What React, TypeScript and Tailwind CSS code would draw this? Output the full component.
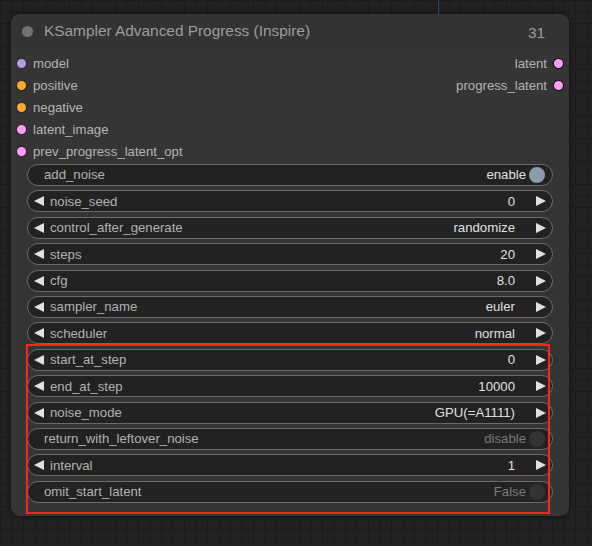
import React from 'react';

type Widget =
  | { kind: 'num' | 'combo'; label: string; value: string }
  | { kind: 'toggle'; label: string; value: string; on: boolean };

const inputs = [
  { name: 'model', color: 'bg-[#b39ddb]' },
  { name: 'positive', color: 'bg-[#ffa931]' },
  { name: 'negative', color: 'bg-[#ffa931]' },
  { name: 'latent_image', color: 'bg-[#ff9cf9]' },
  { name: 'prev_progress_latent_opt', color: 'bg-[#ff9cf9]' },
];

const outputs = ['latent', 'progress_latent'];

const widgets: Widget[] = [
  { kind: 'toggle', label: 'add_noise', value: 'enable', on: true },
  { kind: 'num', label: 'noise_seed', value: '0' },
  { kind: 'combo', label: 'control_after_generate', value: 'randomize' },
  { kind: 'num', label: 'steps', value: '20' },
  { kind: 'num', label: 'cfg', value: '8.0' },
  { kind: 'combo', label: 'sampler_name', value: 'euler' },
  { kind: 'combo', label: 'scheduler', value: 'normal' },
  { kind: 'num', label: 'start_at_step', value: '0' },
  { kind: 'num', label: 'end_at_step', value: '10000' },
  { kind: 'combo', label: 'noise_mode', value: 'GPU(=A1111)' },
  { kind: 'toggle', label: 'return_with_leftover_noise', value: 'disable', on: false },
  { kind: 'num', label: 'interval', value: '1' },
  { kind: 'toggle', label: 'omit_start_latent', value: 'False', on: false },
];

const Arrow = ({ dir }: { dir: 'left' | 'right' }) => (
  <svg width="10" height="10" viewBox="0 0 10 10" className="shrink-0">
    <polygon points={dir === 'left' ? '10,0 10,10 0,5' : '0,0 0,10 10,5'} fill="#e0e0e0" />
  </svg>
);

const WidgetRow = ({ w }: { w: Widget }) => {
  if (w.kind === 'toggle') {
    return (
      <div className="h-[22px] rounded-full border border-[#6a6a6a] bg-[#222222] flex items-center pl-[16px] pr-[7px]">
        <span className="text-[#b2b2b2] flex-1">{w.label}</span>
        <span className={w.on ? 'text-[#e0e0e0]' : 'text-[#7a7a7a]'}>{w.value}</span>
        <span className={`ml-[3px] w-[16px] h-[16px] rounded-full ${w.on ? 'bg-[#8b9bab]' : 'bg-[#333333]'}`} />
      </div>
    );
  }
  return (
    <div className="h-[22px] rounded-full border border-[#6a6a6a] bg-[#222222] flex items-center pl-[6px] pr-[6px]">
      <Arrow dir="left" />
      <span className="ml-[6px] text-[#b2b2b2] flex-1">{w.label}</span>
      <span className="text-[#e0e0e0] mr-[21px]">{w.value}</span>
      <Arrow dir="right" />
    </div>
  );
};

export default function App() {
  return (
    <div
      className="relative w-[592px] h-[546px] overflow-hidden bg-[#222222] bg-[linear-gradient(to_right,#1b1b1b_1px,transparent_1px),linear-gradient(to_bottom,#1b1b1b_1px,transparent_1px)] bg-[size:11.5px_11.5px] pt-[14px] pl-[11px] text-[13.2px] leading-none"
      style={{ fontFamily: '"Liberation Sans", Arial, sans-serif' }}
    >
      {/* link coming in from above */}
      <div className="absolute left-[438px] top-0 h-[14px] w-px bg-[#28487a]" />

      <div className="w-[558px] rounded-[9px] bg-[#353535] shadow-[0_0_6px_rgba(0,0,0,0.5)]">
        <div className="h-[33px] flex items-center border-b border-[#2f2f2f] bg-[#333333] rounded-t-[9px] pl-[11px] pr-[24px] pt-[2px]">
          <span className="w-[11px] h-[11px] rounded-full bg-[#737373]" />
          <span className="ml-[11px] text-[15.4px] text-[#9c9c9c] flex-1">KSampler Advanced Progress (Inspire)</span>
          <span className="text-[15.4px] text-[#9c9c9c] mt-[3px]">31</span>
        </div>

        <div className="pt-[5px] flex justify-between">
          <div className="flex flex-col">
            {inputs.map((s) => (
              <div key={s.name} className="h-[22px] flex items-center pl-[6px] pt-[1px]">
                <span className={`w-[9px] h-[9px] rounded-full ${s.color} ring-1 ring-[#2a2a2a]`} />
                <span className="ml-[7px] text-[#b4b4b4]">{s.name}</span>
              </div>
            ))}
          </div>
          <div className="flex flex-col items-end">
            {outputs.map((o) => (
              <div key={o} className="h-[22px] flex items-center pr-[6px] pt-[1px]">
                <span className="mr-[7px] text-[#b4b4b4]">{o}</span>
                <span className="w-[9px] h-[9px] rounded-full bg-[#ff9cf9] ring-1 ring-[#111111]" />
              </div>
            ))}
          </div>
        </div>

        <div className="mt-[2px] px-[16px] pb-[13px] flex flex-col gap-[4.4px]">
          {widgets.map((w) => (
            <WidgetRow key={w.label} w={w} />
          ))}
        </div>
      </div>

      {/* highlight box */}
      <div className="absolute left-[26px] top-[344px] w-[524px] h-[170px] border-2 border-[#ff2418] pointer-events-none" />
    </div>
  );
}
